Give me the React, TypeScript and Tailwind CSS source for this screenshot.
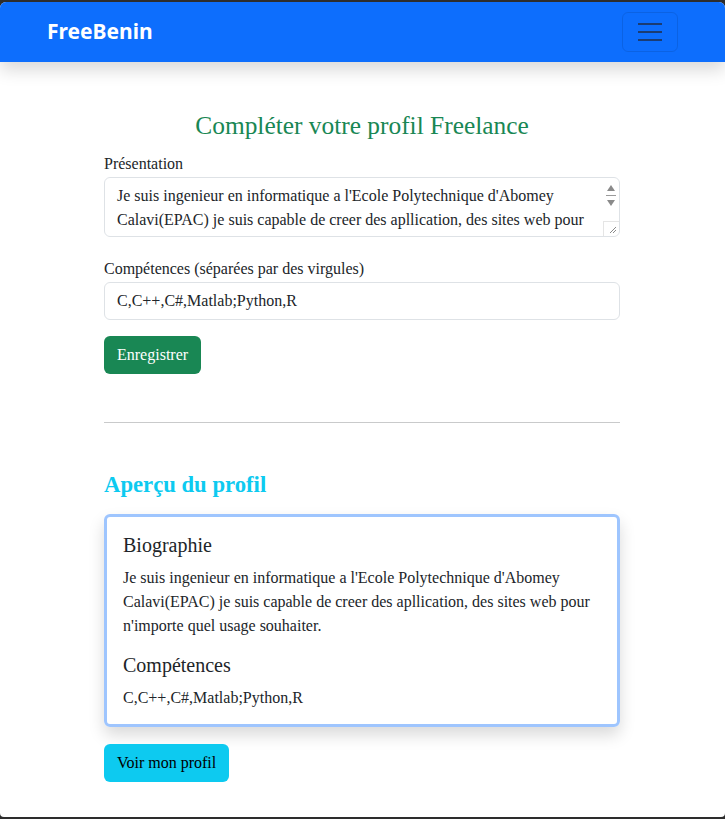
const bio =
  "Je suis ingenieur en informatique a l'Ecole Polytechnique d'Abomey Calavi(EPAC) je suis capable de creer des apllication, des sites web pour n'importe quel usage souhaiter.";
const skills = 'C,C++,C#,Matlab;Python,R';

function Navbar() {
  return (
    <nav className="relative z-10 flex h-[60px] items-center justify-between bg-[#0d6efd] pl-[47px] pr-[47px] shadow-[0_8px_16px_rgba(0,0,0,0.15)]">
      <span className="font-['Noto_Sans',sans-serif] text-[21px] font-bold text-white">FreeBenin</span>
      <button className="flex h-[40px] w-[56px] flex-col items-center justify-center gap-[6px] rounded-[6px] border border-[rgba(0,0,0,0.1)]">
        <span className="block h-[2px] w-[24px] bg-[#1b3c73]" />
        <span className="block h-[2px] w-[24px] bg-[#1b3c73]" />
        <span className="block h-[2px] w-[24px] bg-[#1b3c73]" />
      </button>
    </nav>
  );
}

function FakeTextarea() {
  return (
    <div className="relative flex h-[60px] rounded-[6px] border border-[#dee2e6] bg-white">
      <div className="flex-1 overflow-hidden pl-[12px] pr-[4px] pt-[6px] text-[16px] leading-[24px] text-[#212529]">
        {bio}
      </div>
      {/* native-looking scrollbar + resize grip */}
      <div className="flex w-[16px] flex-col items-center pt-[6px]">
        <svg width="10" height="8" viewBox="0 0 10 8">
          <path d="M5 1 L9 7 L1 7 Z" fill="#8a8a8a" />
        </svg>
        <span className="mt-[3px] block h-[1px] w-[10px] bg-[#9a9a9a]" />
        <svg className="mt-[3px]" width="10" height="8" viewBox="0 0 10 8">
          <path d="M1 1 L9 1 L5 7 Z" fill="#8a8a8a" />
        </svg>
        <div className="mt-auto flex h-[15px] w-[16px] items-end justify-end border-l border-t border-[#e5e5e5] pb-[2px] pr-[2px]">
          <svg width="8" height="8" viewBox="0 0 8 8">
            <path d="M1 7 L7 1 M4 7 L7 4" stroke="#8a8a8a" strokeWidth="1" />
          </svg>
        </div>
      </div>
    </div>
  );
}

export default function App() {
  return (
    <div className="h-[819px] overflow-hidden bg-[#2d2d2d] pt-[2px] font-['Liberation_Serif','Times_New_Roman',serif]">
      <div className="h-[815px] overflow-hidden rounded-t-[6px] rounded-b-[4px] bg-white">
        <Navbar />
        <main className="ml-[104px] w-[516px] text-[#212529]">
          <h2 className="mt-[48px] text-center text-[25.4px] leading-[31px] text-[#198754]">
            Compléter votre profil Freelance
          </h2>

          <form className="mt-[11px]">
            <label className="block text-[16px] leading-[24px]">Présentation</label>
            <div className="mt-[1px]">
              <FakeTextarea />
            </div>

            <label className="mt-[20px] block text-[16px] leading-[24px]">
              Compétences (séparées par des virgules)
            </label>
            <div className="mt-[1px] flex h-[38px] items-center rounded-[6px] border border-[#dee2e6] px-[12px] text-[16px]">
              {skills}
            </div>

            <button
              type="button"
              className="mt-[16px] h-[38px] rounded-[6px] bg-[#198754] px-[13px] text-[16px] text-white"
            >
              Enregistrer
            </button>
          </form>

          <hr className="mt-[48px] border-t border-[#c9cacb]" />

          <h3 className="mt-[49px] text-[22.7px] font-bold leading-[26px] text-[#0dcaf0]">Aperçu du profil</h3>

          <div className="mt-[16px] rounded-[6px] border-[3px] border-[#9ec5fe] px-[16px] pb-[14px] pt-[16px] shadow-[0_8px_16px_rgba(0,0,0,0.15)]">
            <h5 className="text-[20px] leading-[24px]">Biographie</h5>
            <p className="mt-[9px] text-[16px] leading-[24px]">{bio}</p>
            <h5 className="mt-[15px] text-[20px] leading-[24px]">Compétences</h5>
            <p className="mt-[9px] text-[16px] leading-[24px]">{skills}</p>
          </div>

          <button
            type="button"
            className="mt-[17px] h-[38px] rounded-[6px] bg-[#0dcaf0] px-[13px] text-[16px] text-black"
          >
            Voir mon profil
          </button>
        </main>
      </div>
    </div>
  );
}
